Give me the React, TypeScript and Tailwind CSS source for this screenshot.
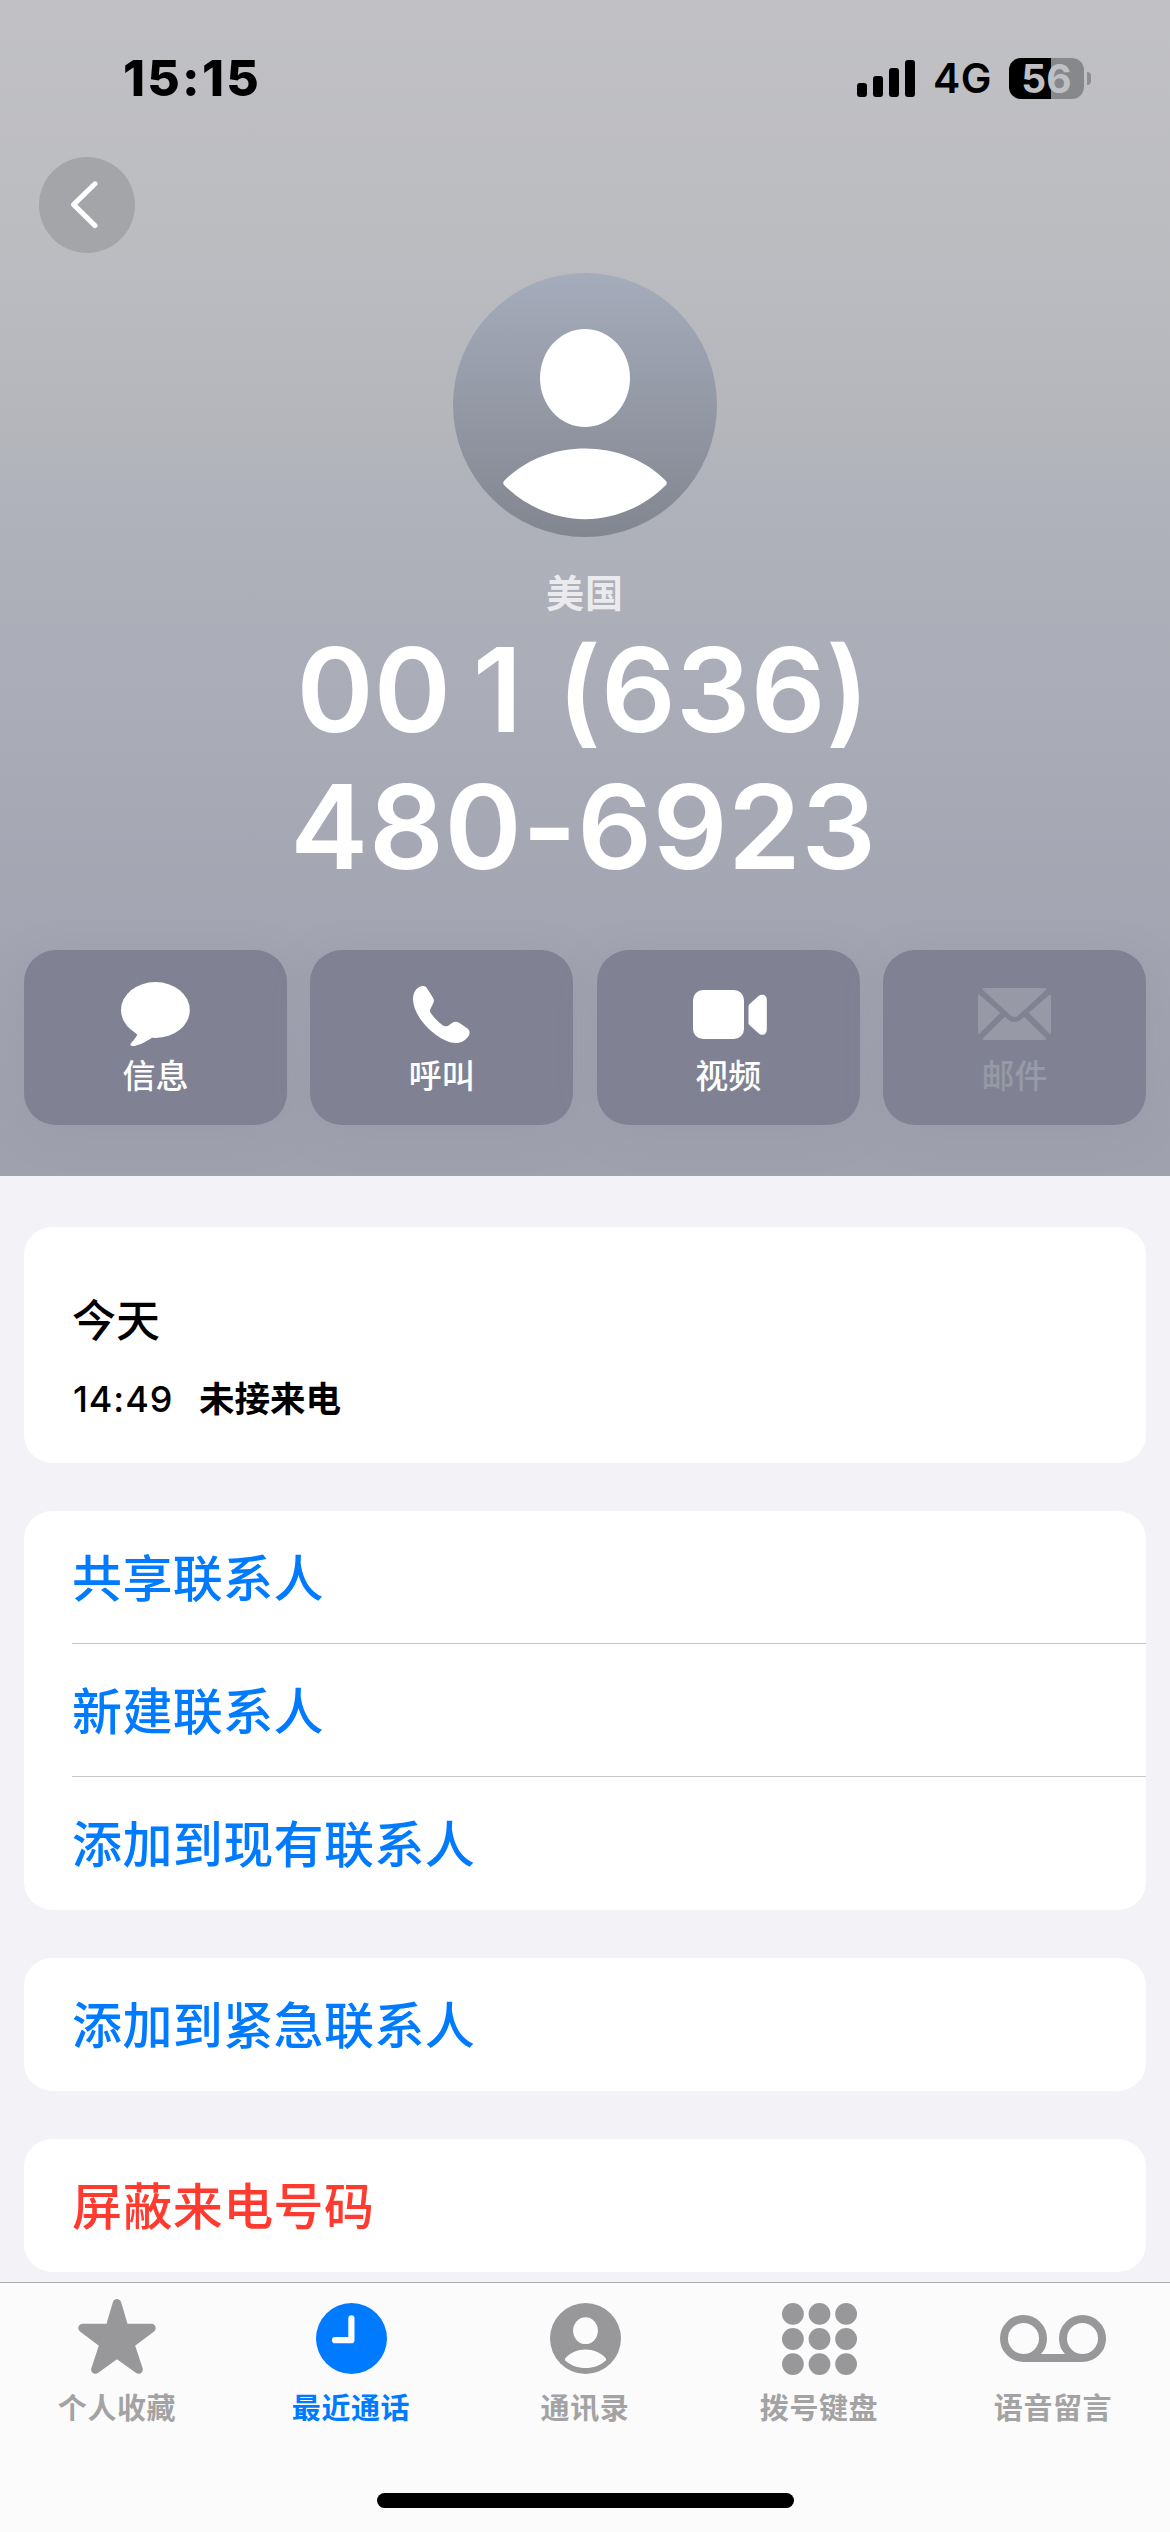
import type { ReactNode } from "react"
import clsx from "clsx"

const MessageIcon = () => (
  <svg width="69" height="64" viewBox="0 0 69 64" fill="currentColor">
    <ellipse cx="34.4" cy="28" rx="34.4" ry="28" />
    <path d="M12 49L16.3 52.5C15.5 55 12 59 10 61.2C8.8 62.8 9.4 64 11.5 64C17 64 25 59.5 30.5 55.9L34 50Z" />
  </svg>
)

const PhoneIcon = () => (
  <svg width="57" height="57" viewBox="0 0 57 57" fill="currentColor">
    <path d="M9.5 0C3.5 0.8 0 6.5 0 13.2C0 32 26 57 43 57C51 57 56.6 50.5 56.6 46.8C56.6 45.2 56 44 54.5 42.6L46.5 37C43.8 35.2 41.5 35.5 39 37L35.5 39.4C34 40.5 31.5 40.6 30 39.5C25.5 36.5 20.5 31 17.4 26.5C16.8 25.3 16.8 24.3 17.4 23L20 17.8C21.2 15.6 21.2 14 20 11.8L13.8 2C12.8 0.5 11.2 -0.2 9.5 0Z" />
  </svg>
)

const VideoIcon = () => (
  <svg className="ml-[3px]" width="74" height="49" viewBox="0 0 74 49" fill="currentColor">
    <rect width="51" height="49" rx="10" />
    <path d="M55.5 17C55.5 15.5 55.8 14.8 57 13.8L65.5 6C69 3.5 73.8 4.5 73.8 10V39.5C73.8 45 69 46 65.5 43.2L57 35.5C55.8 34.6 55.5 34 55.5 32.5Z" />
  </svg>
)

const MailIcon = () => (
  <svg width="73" height="52" viewBox="0 0 73 52" fill="currentColor">
    <path d="M4 1C5 0.3 6 0 8 0H65C67 0 68 0.3 69 1L40.5 27.3C38 29.6 35 29.6 32.5 27.3Z" />
    <path d="M0.8 6.2L22.3 24.7L0.8 46.2C0.2 45.4 0 44.6 0 43V9.5C0 8 0.2 7 0.8 6.2Z" />
    <path d="M72.2 6.2L50.7 24.7L72.2 46.2C72.8 45.4 73 44.6 73 43V9.5C73 8 72.8 7 72.2 6.2Z" />
    <path d="M4.2 51L26.9 28.8L29.5 31C33.8 35 39.2 35 43.5 31L46.1 28.8L68.8 51C67.8 51.8 66.8 52 65 52H8C6.2 52 5.2 51.8 4.2 51Z" />
  </svg>
)

const StarIcon = () => (
  <svg className="mb-[4px]" width="78" height="75" viewBox="0 0 78 75" fill="currentColor">
    <path
      d="M39 4.3L46.3 29H73.5L52.2 45.2L60.6 70.6L39 55L17.4 70.6L25.8 45.2L4.5 29H31.7Z"
      stroke="currentColor"
      strokeWidth="8.5"
      strokeLinejoin="round"
    />
  </svg>
)

const ClockIcon = () => (
  <svg width="71" height="71" viewBox="0 0 71 71">
    <circle cx="35.5" cy="35.5" r="35.5" fill="currentColor" />
    <path d="M35.4 15.3V37.2H19" fill="none" stroke="#fbfbfc" strokeWidth="6.2" strokeLinecap="round" strokeLinejoin="round" />
  </svg>
)

const PersonIcon = () => (
  <svg width="71" height="71" viewBox="0 0 71 71">
    <circle cx="35.5" cy="35.5" r="35.5" fill="currentColor" />
    <ellipse cx="35.5" cy="27.7" rx="12.4" ry="13.4" fill="#fbfbfc" />
    <path d="M15.3 57.5C14.7 56.7 14.8 56 15.3 55.3C25 43.4 46 43.4 55.7 55.3C56.2 56 56.3 56.7 55.7 57.5C45.5 67.5 25.5 67.5 15.3 57.5Z" fill="#fbfbfc" />
  </svg>
)

const KeypadIcon = () => (
  <svg width="75" height="72" viewBox="0 0 75 72" fill="currentColor">
    {[10.9, 36, 61.1].map((cy) =>
      [10.9, 37.5, 64.1].map((cx) => <circle key={`${cx}-${cy}`} cx={cx} cy={cy} r="10.9" />)
    )}
  </svg>
)

const VoicemailIcon = () => (
  <svg width="106" height="47" viewBox="0 0 106 47" fill="none" stroke="currentColor" strokeWidth="8">
    <circle cx="23.5" cy="23.5" r="19.5" />
    <circle cx="82.5" cy="23.5" r="19.5" />
    <path d="M23.5 43H82.5" />
  </svg>
)

const actions = [
  { label: "信息", icon: <MessageIcon /> },
  { label: "呼叫", icon: <PhoneIcon /> },
  { label: "视频", icon: <VideoIcon /> },
  { label: "邮件", icon: <MailIcon />, disabled: true },
]

const groups = [
  { rows: ["共享联系人", "新建联系人", "添加到现有联系人"], danger: false },
  { rows: ["添加到紧急联系人"], danger: false },
  { rows: ["屏蔽来电号码"], danger: true },
]

const tabs = [
  { label: "个人收藏", icon: <StarIcon /> },
  { label: "最近通话", icon: <ClockIcon />, active: true },
  { label: "通讯录", icon: <PersonIcon /> },
  { label: "拨号键盘", icon: <KeypadIcon /> },
  { label: "语音留言", icon: <VoicemailIcon /> },
]

function StatusBar() {
  return (
    <div className="flex h-[157px] items-start justify-between pt-[54px] pr-[79px] pl-[123px] text-black">
      <span className="text-[50px] leading-[48px] font-extrabold tracking-[2.2px]">15:15</span>

      <div className="flex h-[48px] items-center">
        <div className="mr-[18px] flex h-[37px] items-end gap-1.5">
          <span className="h-[14px] w-[10px] rounded-[3px] bg-black" />
          <span className="h-[21px] w-[10px] rounded-[3px] bg-black" />
          <span className="h-[29px] w-[10px] rounded-[3px] bg-black" />
          <span className="h-[37px] w-[10px] rounded-[3px] bg-black" />
        </div>
        <span className="mr-[19px] w-[57px] text-[41px] leading-[48px] font-semibold tracking-[0.5px]">4G</span>
        <div className="flex h-[41px] w-[75px] items-center justify-center rounded-[12px] bg-linear-to-r from-black from-56% to-[#87888b] to-56% text-[39px] leading-[41px] font-bold text-[#bfc0c4]">
          56
        </div>
        <span className="ml-[3px] h-[13px] w-[4px] rounded-r-full bg-[#8d8e91]" />
      </div>
    </div>
  )
}

function Card({ children }: { children: ReactNode }) {
  return <section className="rounded-[28px] bg-white pl-12">{children}</section>
}

export default function App() {
  return (
    <div
      lang="zh-CN"
      className="flex h-[2532px] w-[1170px] flex-col overflow-hidden bg-[#f2f2f7] font-['Inter','Noto_Sans_CJK_SC',sans-serif]"
    >
      {/* Contact poster */}
      <header className="flex h-[1176px] shrink-0 flex-col bg-[linear-gradient(180deg,#c1c1c5_0px,#bcbdc1_220px,#b5b6bb_430px,#b0b3bb_480px,#a8aab6_760px,#a2a4b1_960px,#9fa1ae_1176px)]">
        <StatusBar />

        <div className="h-[116px] pl-[39px]">
          <button className="flex size-24 items-center rounded-full bg-[#a4a5a9] pl-[31px]">
            <svg width="28" height="48" viewBox="0 0 28 48" fill="none" stroke="white" strokeWidth="5" strokeLinecap="round" strokeLinejoin="round">
              <path d="M25 2.8L3.6 23.6L25 44.6" />
            </svg>
          </button>
        </div>

        <div className="flex h-[677px] flex-col items-center">
          <div className="size-[264px] rounded-full bg-linear-to-b from-[#a5acbb] to-[#828690]">
            <svg width="264" height="264" viewBox="0 0 264 264" fill="white">
              <ellipse cx="132" cy="105" rx="45" ry="49" />
              <path d="M51 212Q49.5 210 51 208C93 164.5 171 164.5 213 208Q214.5 210 213 212C167 257.5 97 257.5 51 212Z" />
            </svg>
          </div>
          <p className="mt-[32px] text-[38px] leading-[48px] font-bold tracking-[1px] text-[#ebebee]">美国</p>
          <h1 className="mt-[4px] text-center text-[117px] leading-[137px] font-semibold text-white">
            <span className="block pr-[4px] tracking-[0.2px]">
              <span className="[word-spacing:-8px]">00 1</span>
              <span className="[word-spacing:5px]"> (636)</span>
            </span>
            <span className="block pr-[3px] tracking-[0.6px]">480-6923</span>
          </h1>
        </div>

        <div className="grid grid-cols-4 gap-x-[23.5px] px-6">
          {actions.map((action) => (
            <button
              key={action.label}
              className={clsx(
                "flex h-[175px] flex-col items-center rounded-[32px] bg-[#808293] shadow-[0_8px_40px_rgba(128,130,147,0.18)]",
                action.disabled ? "text-[#9799a7]" : "text-white"
              )}
            >
              <span className="mt-[28px] flex h-[72px] items-center">{action.icon}</span>
              <span className="mt-[2px] text-[33px] leading-[48px] font-medium">{action.label}</span>
            </button>
          ))}
        </div>
      </header>

      {/* Call log and contact options */}
      <main className="flex h-[1106px] shrink-0 flex-col gap-12 px-6 pt-[51px]">
        <Card>
          <div className="h-[236px] pt-[65px]">
            <h2 className="text-[44px] leading-[58px] font-medium text-black">今天</h2>
            <div className="mt-[24px] flex h-[50px] items-center pl-px text-black">
              <span className="w-[126px] text-[36px] font-medium tracking-[0.9px]">14:49</span>
              <span className="pt-px text-[35.5px] font-bold">未接来电</span>
            </div>
          </div>
        </Card>

        {groups.map((group) => (
          <Card key={group.rows[0]}>
            {group.rows.map((row, index) => (
              <div
                key={row}
                className={clsx(
                  "flex h-[133px] items-center pt-[4px] text-[50px] font-medium tracking-[0.4px]",
                  group.danger ? "text-[#ff3b30]" : "text-[#007aff]",
                  index < group.rows.length - 1 && "border-b border-[#c6c6c8]"
                )}
              >
                {row}
              </div>
            ))}
          </Card>
        ))}
      </main>

      {/* Tab bar */}
      <nav className="flex h-[250px] shrink-0 flex-col items-center border-t border-[#a8a8ad] bg-[#fbfbfc]">
        <div className="grid h-[210px] w-full grid-cols-5">
          {tabs.map((tab) => (
            <button
              key={tab.label}
              className={clsx("flex flex-col items-center", tab.active ? "text-[#007aff]" : "text-[#98989a]")}
            >
              <span className="mt-[16px] flex h-[79px] items-center">{tab.icon}</span>
              <span
                className={clsx(
                  "mt-[15px] text-[29px] leading-[32px] font-bold tracking-[0.6px]",
                  tab.active ? "text-[#007aff]" : "text-[#a3a3a4]"
                )}
              >
                {tab.label}
              </span>
            </button>
          ))}
        </div>
        <div className="h-[15px] w-[417px] rounded-full bg-black" />
      </nav>
    </div>
  )
}
